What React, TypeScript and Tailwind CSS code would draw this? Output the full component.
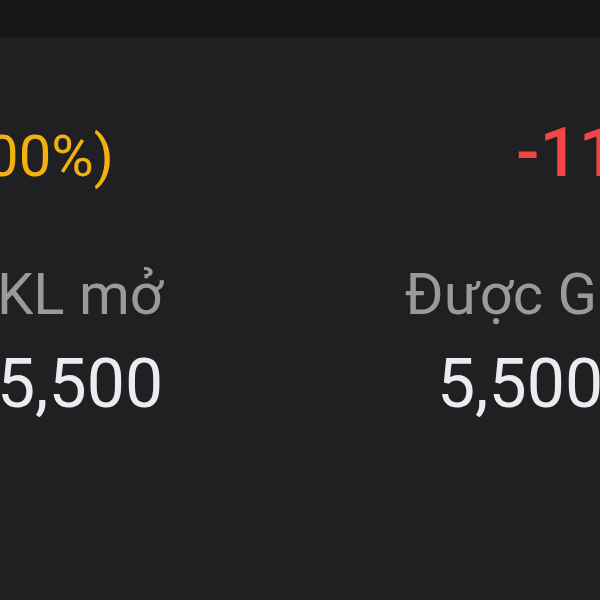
import React from "react";

export default function App() {
  const font = { fontFamily: "Roboto, 'Noto Sans', sans-serif" };
  return (
    <div className="w-[600px] h-[600px] overflow-hidden bg-[#202022] flex flex-col" style={font}>
      <div className="h-[37px] shrink-0 bg-[#161618]" />
      <div className="flex-1 flex flex-col">
        {/* Row 1 */}
        <div className="mt-[81px] flex items-baseline whitespace-nowrap">
          <div className="w-[114px] shrink-0 flex justify-end">
            <span className="text-[58px] leading-none text-[#f3b10f]">(100%)</span>
          </div>
          <div className="pl-[402px] shrink-0">
            <span className="text-[69px] leading-none font-medium text-[#f24646]">-11,500</span>
          </div>
        </div>
        {/* Rows 2-3 */}
        <div className="mt-[78px] ml-[-140px] w-[880px] grid grid-cols-2 whitespace-nowrap text-center">
          <div className="flex flex-col items-center">
            <span className="text-[58px] leading-[58px] text-[#9a9a9c]">KL mở</span>
            <span className="mt-[27px] text-[68px] leading-[68px] text-[#ececf0]">5,500</span>
          </div>
          <div className="flex flex-col items-center">
            <span className="text-[58px] leading-[58px] text-[#9a9a9c]">Được GD</span>
            <span className="mt-[27px] text-[68px] leading-[68px] text-[#ececf0]">5,500</span>
          </div>
        </div>
      </div>
    </div>
  );
}
